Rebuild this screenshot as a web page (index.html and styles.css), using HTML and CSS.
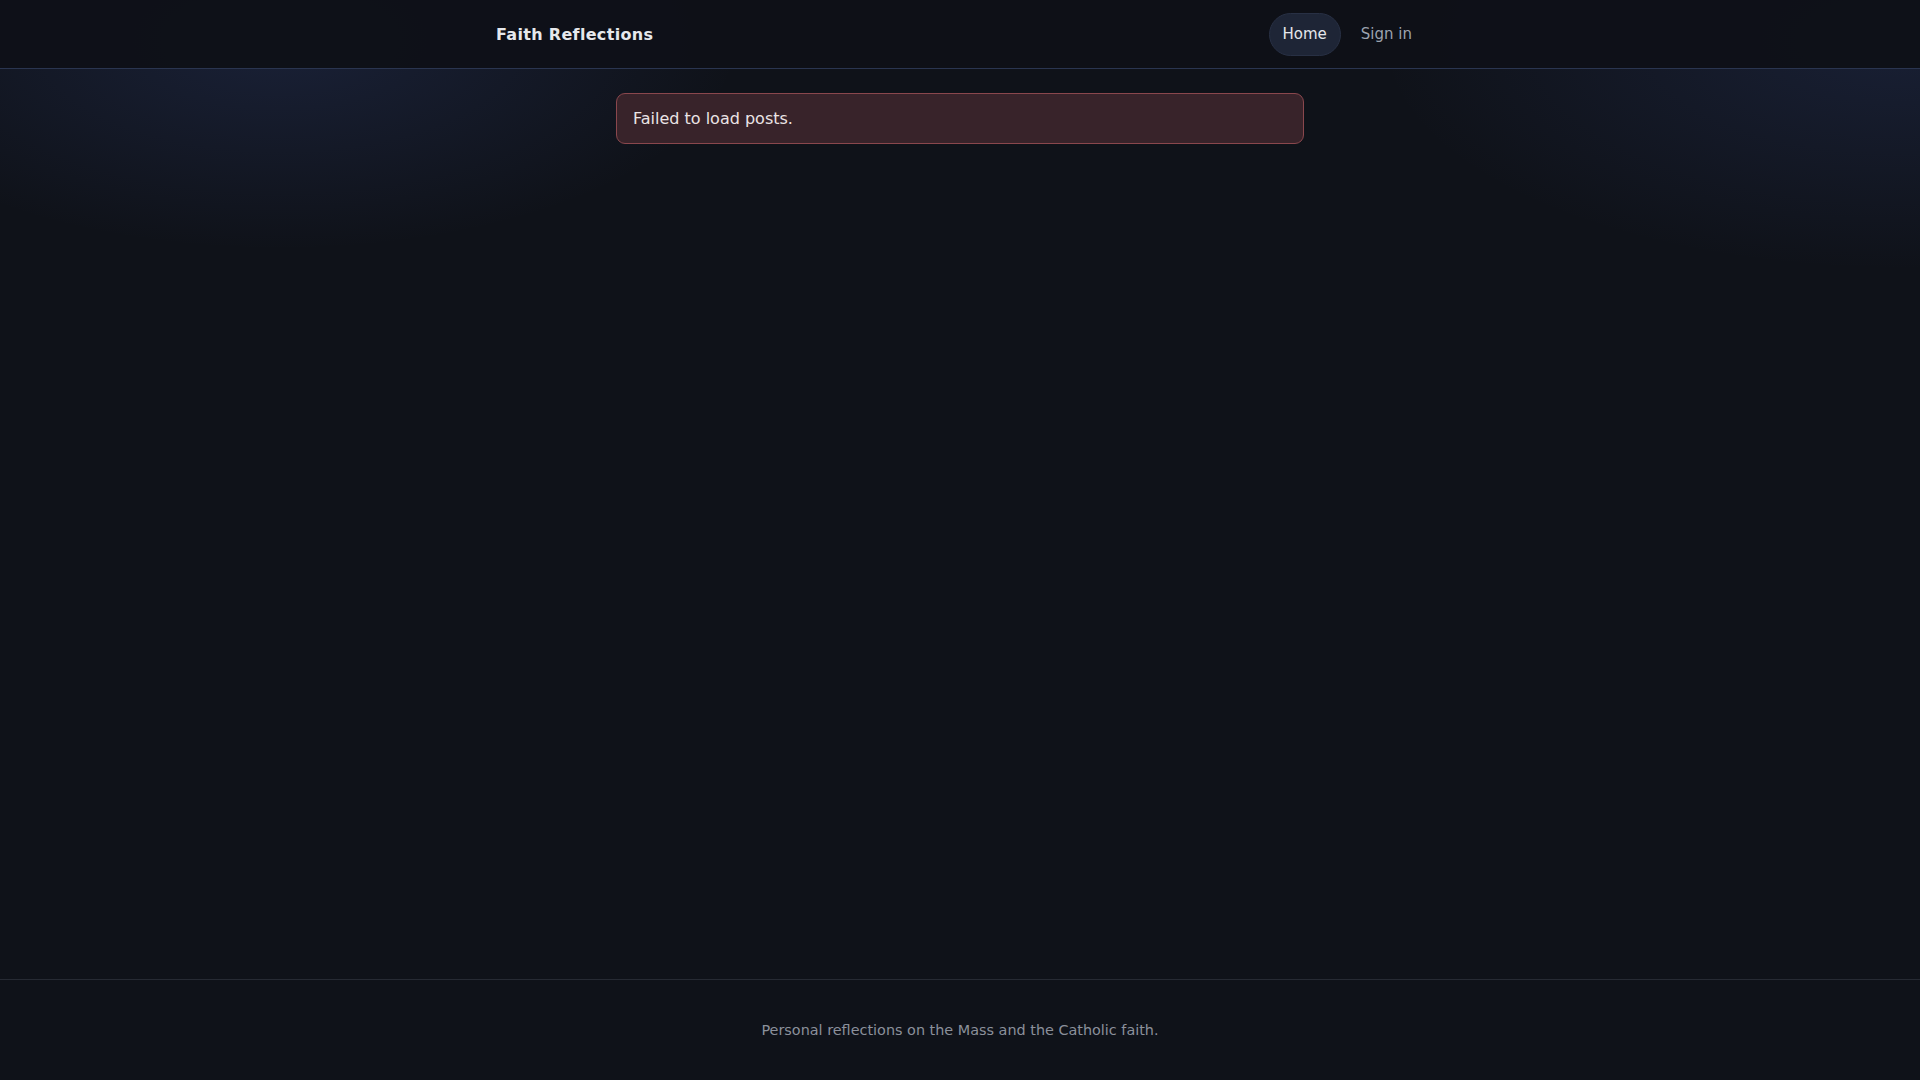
FILE: index.html
```html
<!DOCTYPE html>
<html lang="en">
<head>
<meta charset="utf-8">
<title>Faith Reflections</title>
<link rel="stylesheet" href="styles.css">
</head>
<body>
<div class="page">
  <header class="site-header">
    <div class="container header-inner">
      <a class="brand" href="#">Faith Reflections</a>
      <nav class="nav">
        <a class="nav-link active" href="#">Home</a>
        <a class="nav-link" href="#">Sign in</a>
      </nav>
    </div>
  </header>
  <main class="main">
    <div class="content">
      <div class="alert">Failed to load posts.</div>
    </div>
  </main>
  <footer class="site-footer">
    <p class="footer-text">Personal reflections on the Mass and the Catholic faith.</p>
  </footer>
</div>
</body>
</html>
```

FILE: styles.css
```css
* { box-sizing: border-box; }

html, body {
  margin: 0;
  padding: 0;
  height: 100%;
}

body {
  font-family: "DejaVu Sans", "Noto Sans", sans-serif;
  color: #e5e7eb;
  background-color: #0f1219;
  background-image:
    radial-gradient(ellipse 460px 210px at 280px 40px, rgba(80, 110, 210, 0.16), rgba(80, 110, 210, 0) 100%),
    radial-gradient(ellipse 520px 230px at 1900px 40px, rgba(80, 110, 210, 0.15), rgba(80, 110, 210, 0) 100%);
  background-repeat: no-repeat;
}

a { text-decoration: none; color: inherit; }

.page {
  min-height: 100vh;
  display: flex;
  flex-direction: column;
}

.site-header {
  background: rgba(14, 17, 24, 0.97);
  border-bottom: 1px solid #2a3550;
}

.container {
  max-width: 960px;
  margin: 0 auto;
  padding: 0 16px;
}

.header-inner {
  height: 68px;
  display: flex;
  align-items: center;
  justify-content: space-between;
}

.brand {
  font-size: 16px;
  font-weight: 700;
  letter-spacing: 0.02em;
  color: #e6e8ec;
}

.nav {
  display: flex;
  align-items: center;
  gap: 6px;
  margin-right: -2px;
}

.nav-link {
  font-size: 15px;
  line-height: 21px;
  padding: 10px 13px;
  border: 1px solid transparent;
  border-radius: 999px;
  color: #9ca3af;
}

.nav-link.active {
  background: #1e2536;
  border-color: #283044;
  color: #e5e7eb;
}

.main {
  flex: 1;
}

.content {
  max-width: 720px;
  margin: 0 auto;
  padding: 24px 16px;
}

.alert {
  background: #38232a;
  border: 1px solid #8a474d;
  border-radius: 9px;
  padding: 13px 16px;
  font-size: 16px;
  line-height: 23px;
  color: #ebe3e5;
}

.site-footer {
  border-top: 1px solid #262a33;
  padding: 40px 16px;
  text-align: center;
}

.footer-text {
  margin: 0;
  font-size: 14.4px;
  line-height: 20px;
  color: #8b909b;
}
```
